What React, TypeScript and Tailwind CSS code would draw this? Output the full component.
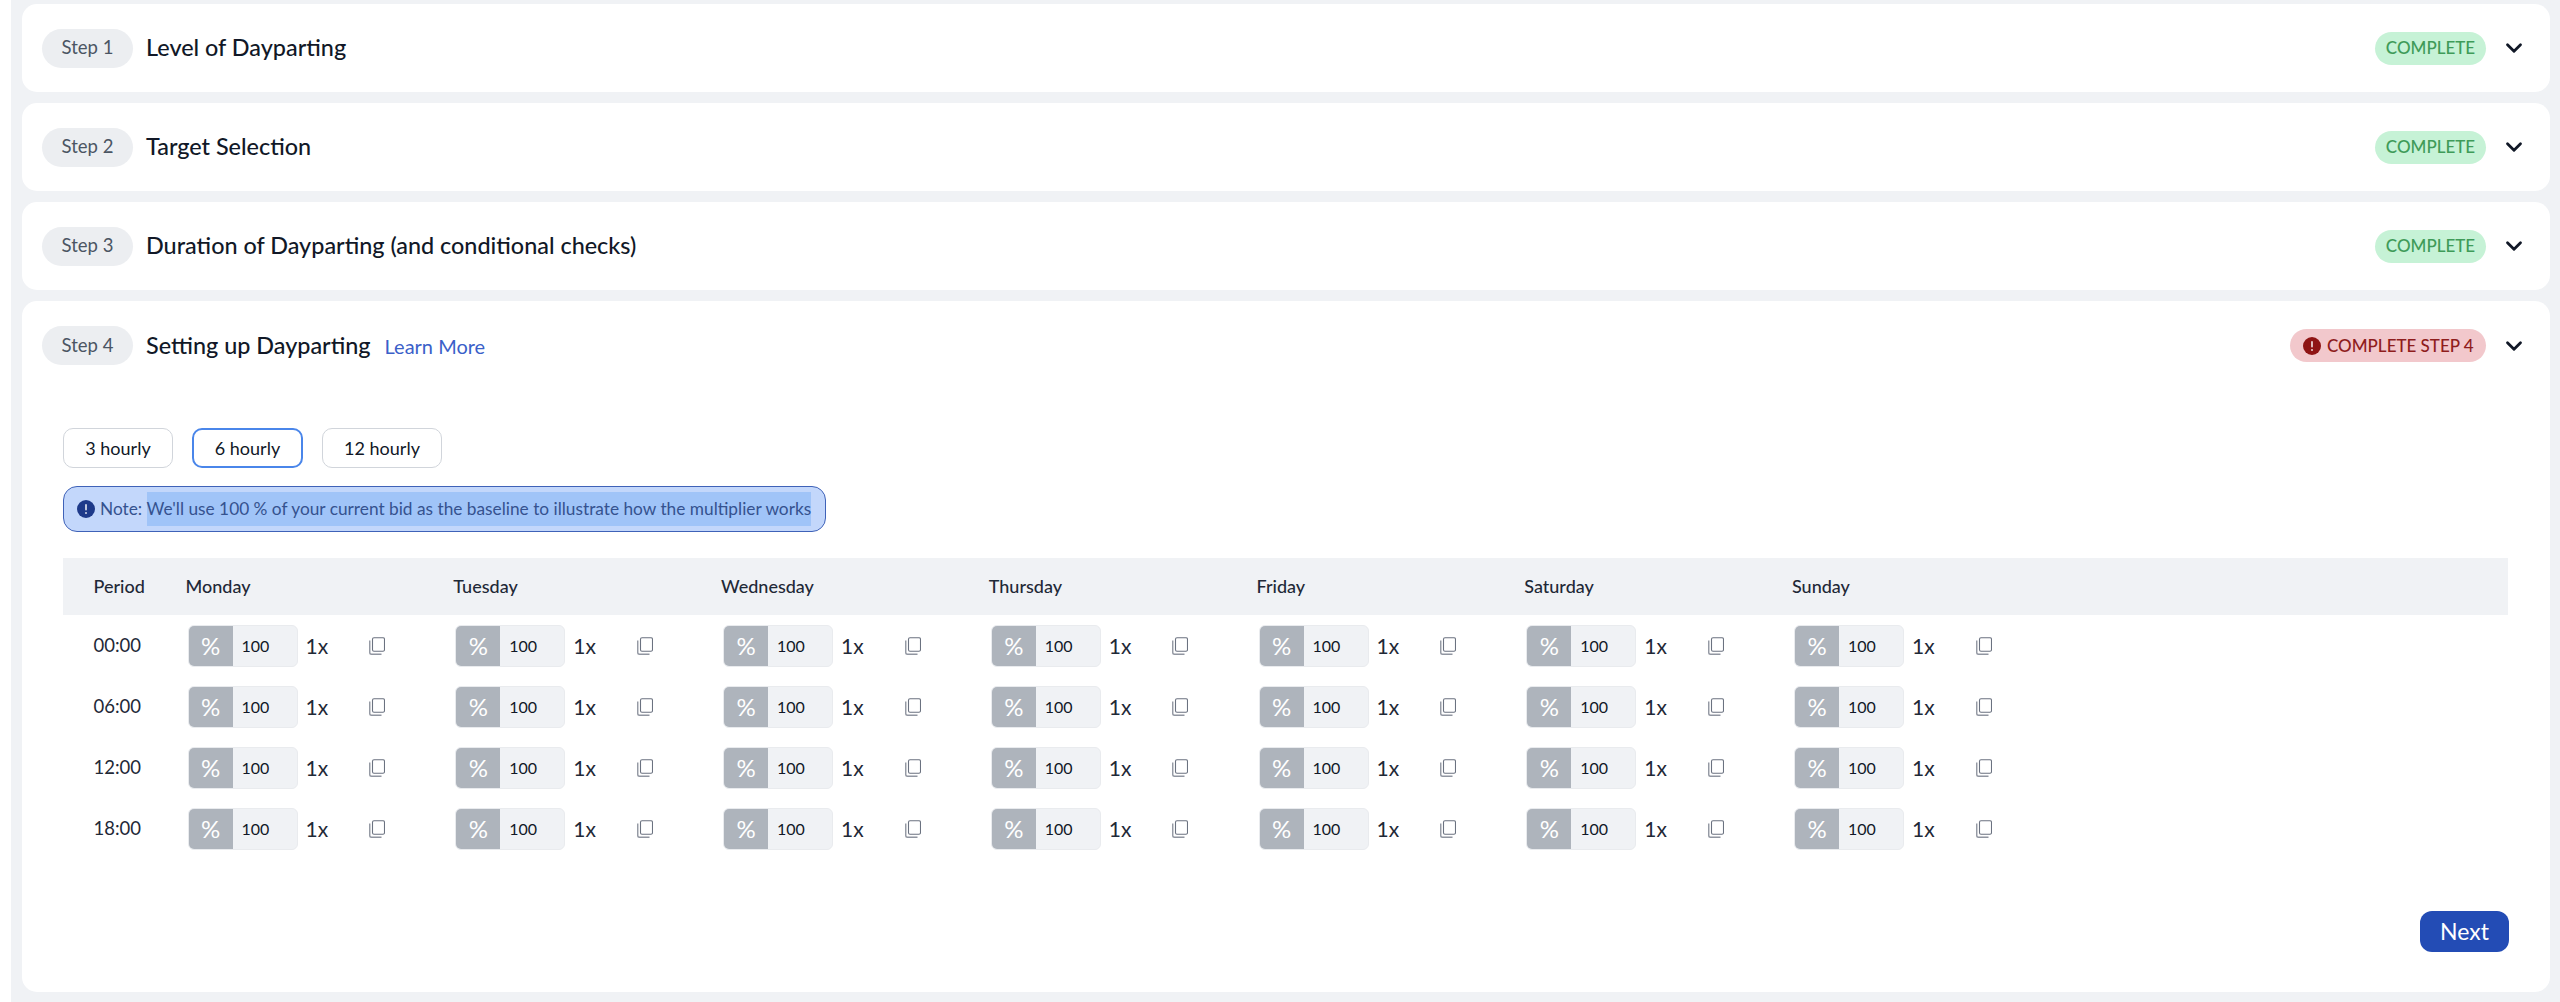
import { ChevronDown } from "lucide-react";

const DAYS = ["Monday", "Tuesday", "Wednesday", "Thursday", "Friday", "Saturday", "Sunday"];
const PERIODS = ["00:00", "06:00", "12:00", "18:00"];
const STEPS = [
  { step: "Step 1", title: "Level of Dayparting" },
  { step: "Step 2", title: "Target Selection" },
  { step: "Step 3", title: "Duration of Dayparting (and conditional checks)" },
];

function AlertIcon({ className }: { className: string }) {
  return (
    <svg viewBox="0 0 18 18" className={className}>
      <circle cx="9" cy="9" r="9" fill="currentColor" />
      <rect x="8.1" y="4" width="1.8" height="6.5" rx="0.9" fill="#ffffff" fillOpacity="0.8" />
      <circle cx="9" cy="13" r="1" fill="#ffffff" fillOpacity="0.8" />
    </svg>
  );
}

function CopyIcon() {
  return (
    <svg viewBox="0 0 16 18" className="w-[16px] h-[18px] text-[#6b7280]" fill="none" stroke="currentColor">
      <rect x="3.5" y="0.75" width="12" height="13.5" rx="1.5" strokeWidth="1.1" />
      <path d="M0.75 3.5V15.5C0.75 16.6 1.6 17.3 2.6 17.3H12.5" strokeWidth="1.4" opacity="0.75" />
    </svg>
  );
}

function StepHeader({ step, children }: { step: string; children: React.ReactNode }) {
  return (
    <div className="flex items-center">
      <span className="flex items-center justify-center w-[91px] h-[39px] rounded-[20px] bg-[#eceef1] text-[18.5px] text-[#4b5563]">
        {step}
      </span>
      {children}
    </div>
  );
}

function Chevron() {
  return <ChevronDown className="w-[26px] h-[26px] ml-[15px] text-[#111827]" strokeWidth={2.6} />;
}

function CompleteRow({ step, title }: { step: string; title: string }) {
  return (
    <div className="flex items-center justify-between h-[88px] pl-[20px] pr-[23px] bg-white rounded-[15px]">
      <StepHeader step={step}>
        <span className="ml-[13px] text-[23.4px] font-medium text-[#111827]">{title}</span>
      </StepHeader>
      <div className="flex items-center">
        <span className="flex items-center justify-center w-[111px] h-[33px] rounded-[17px] bg-[#c6f2d6] text-[#3f9b59] text-[17px] font-medium">
          COMPLETE
        </span>
        <Chevron />
      </div>
    </div>
  );
}

function MultiplierCell() {
  return (
    <div className="flex items-center w-[267.75px] pl-[2px]">
      <div className="flex items-center h-[42px] w-[110px] rounded-[6px] bg-[#f0f2f5] border border-[#e9ebee] overflow-hidden">
        <span className="flex items-center justify-center w-[44px] h-full bg-[#aeb4bc] text-white text-[24px]">%</span>
        <span className="pl-[9px] text-[16px] text-[#111827]">100</span>
      </div>
      <span className="ml-[8px] text-[21px] text-[#1f2937]">1x</span>
      <span className="ml-[41px] flex">
        <CopyIcon />
      </span>
    </div>
  );
}

export default function App() {
  return (
    <div className="flex w-[2560px] h-[1002px] bg-white overflow-hidden" style={{ fontFamily: '"Lato", "Noto Sans", sans-serif' }}>
      <div className="w-[11px] shrink-0" />
      <div className="flex flex-col gap-[11px] flex-1 bg-[#f0f2f5] pl-[11px] pr-[10px] pt-[4px] pb-[10px]">
        {STEPS.map((s) => (
          <CompleteRow key={s.step} step={s.step} title={s.title} />
        ))}

        {/* Step 4, expanded */}
        <div className="flex-1 flex flex-col bg-white rounded-[15px]">
          <div className="flex items-center justify-between pl-[20px] pr-[23px] pt-[25px]">
            <StepHeader step="Step 4">
              <span className="ml-[13px] text-[23.4px] font-medium text-[#111827]">Setting up Dayparting</span>
              <span className="ml-[14px] text-[20px] text-[#3b5fc9]">Learn More</span>
            </StepHeader>
            <div className="flex items-center">
              <span className="flex items-center w-[196px] h-[33px] pl-[13px] rounded-[17px] bg-[#f2c8cc] text-[#8f1d1d] text-[17px] font-medium">
                <AlertIcon className="w-[18px] h-[18px] mr-[6px] shrink-0 text-[#8f1414]" />
                COMPLETE STEP 4
              </span>
              <Chevron />
            </div>
          </div>

          <div className="flex gap-[19px] ml-[41px] mt-[63px]">
            <button className="w-[110px] h-[40px] rounded-[10px] border border-[#d1d5db] text-[18px] text-[#111827]">3 hourly</button>
            <button className="w-[111px] h-[40px] rounded-[10px] border-2 border-[#4a86ea] text-[18px] text-[#111827]">6 hourly</button>
            <button className="w-[120px] h-[40px] rounded-[10px] border border-[#d1d5db] text-[18px] text-[#111827]">12 hourly</button>
          </div>

          <div className="flex items-center w-[763px] h-[46px] ml-[41px] mt-[18px] pl-[13px] rounded-[14px] bg-[#c3d7fb] border border-[#3f62b8] text-[17.3px] text-[#35528f]">
            <AlertIcon className="w-[18px] h-[18px] mr-[5px] shrink-0 text-[#1e3a8a]" />
            <span className="whitespace-nowrap">Note:&nbsp;</span>
            <span className="bg-[#a0c4f8] leading-[34px] whitespace-nowrap">We'll use 100 % of your current bid as the baseline to illustrate how the multiplier works</span>
          </div>

          <div className="flex items-center h-[57px] ml-[41px] mr-[42px] mt-[26px] bg-[#f0f2f5] text-[18px] font-medium text-[#1f2937]">
            <span className="w-[122.5px] pl-[30.5px]">Period</span>
            {DAYS.map((d) => (
              <span key={d} className="w-[267.75px]">{d}</span>
            ))}
          </div>

          <div className="flex flex-col gap-[19px] ml-[41px] mt-[10px]">
            {PERIODS.map((p) => (
              <div key={p} className="flex items-center">
                <span className="w-[122.5px] pl-[30.5px] text-[18.5px] text-[#1f2937]">{p}</span>
                {DAYS.map((d) => (
                  <MultiplierCell key={d} />
                ))}
              </div>
            ))}
          </div>

          <div className="flex justify-end mr-[41px] mt-[61px]">
            <button className="w-[89px] h-[41px] rounded-[12px] bg-[#234cb5] text-white text-[23px]">Next</button>
          </div>
        </div>
      </div>
    </div>
  );
}
